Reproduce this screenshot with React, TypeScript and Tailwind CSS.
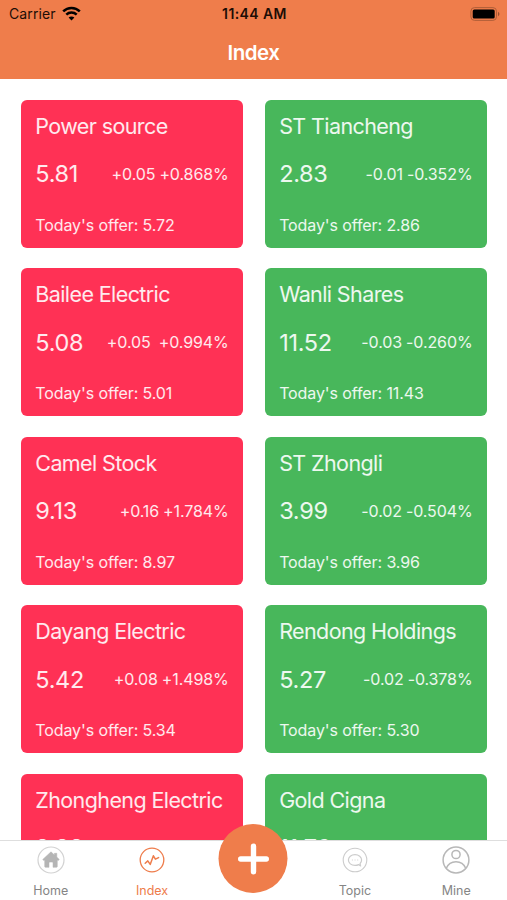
import React, { useState } from 'react';

interface Stock {
  name: string;
  price: string;
  change: string;
  percent: string;
  offer: string;
  wide?: boolean;
}

const STOCKS: Stock[] = [
  { name: 'Power source', price: '5.81', change: '+0.05', percent: '+0.868%', offer: '5.72' },
  { name: 'ST Tiancheng', price: '2.83', change: '-0.01', percent: '-0.352%', offer: '2.86' },
  { name: 'Bailee Electric', price: '5.08', change: '+0.05', percent: '+0.994%', offer: '5.01', wide: true },
  { name: 'Wanli Shares', price: '11.52', change: '-0.03', percent: '-0.260%', offer: '11.43' },
  { name: 'Camel Stock', price: '9.13', change: '+0.16', percent: '+1.784%', offer: '8.97' },
  { name: 'ST Zhongli', price: '3.99', change: '-0.02', percent: '-0.504%', offer: '3.96' },
  { name: 'Dayang Electric', price: '5.42', change: '+0.08', percent: '+1.498%', offer: '5.34' },
  { name: 'Rendong Holdings', price: '5.27', change: '-0.02', percent: '-0.378%', offer: '5.30' },
  { name: 'Zhongheng Electric', price: '8.88', change: '', percent: '', offer: '' },
  { name: 'Gold Cigna', price: '11.76', change: '-', percent: '', offer: '' },
];

const HomeIcon = () => (
  <svg width="28" height="28" viewBox="0 0 28 28" fill="none">
    <circle cx="14" cy="14" r="13" stroke="#d2d2d2" strokeWidth="1.2" />
    <path d="M14 5.8 6 13.2c-.4.5-.1 1 .5 1h1.2v6.3c0 .5.3.8.8.8h3.5v-4.4c0-.5.3-.8.8-.8h2.4c.5 0 .8.3.8.8v4.4h3.5c.5 0 .8-.3.8-.8v-6.3h1.2c.6 0 .9-.5.5-1L19.8 11V7.3h-2.4V9z" fill="#b5b5b5" stroke="#b5b5b5" strokeWidth="0.5" strokeLinejoin="round" />
  </svg>
);

const IndexIcon = () => (
  <svg width="28" height="28" viewBox="0 0 28 28" fill="none" stroke="#ee7c4b" strokeLinecap="round" strokeLinejoin="round">
    <circle cx="14" cy="14" r="11.8" strokeWidth="1.3" />
    <path d="M7.2 17.2 9.8 14.9 12.2 18.4 15.4 9.8 17.4 13.2 20.6 11.6" strokeWidth="1.5" />
  </svg>
);

const TopicIcon = () => (
  <svg width="28" height="28" viewBox="0 0 28 28" fill="none" stroke="#cccccc" strokeLinecap="round" strokeLinejoin="round">
    <circle cx="14" cy="14" r="11.8" strokeWidth="1.1" />
    <path d="M17.6 18.6c-1 .5-2.2.8-3.6.8-3.8 0-6.6-2.3-6.6-5.3s2.8-5.4 6.6-5.4 6.6 2.4 6.6 5.4c0 1.3-.6 2.5-1.5 3.4l.5 2.5z" strokeWidth="1.2" />
    <path d="M11.3 14h.1M14 14h.1M16.7 14h.1" strokeWidth="1" />
  </svg>
);

const MineIcon = () => (
  <svg width="28" height="28" viewBox="0 0 28 28" fill="none" stroke="#b8b8b8" strokeWidth="1.5">
    <circle cx="14" cy="14" r="12.9" />
    <circle cx="14" cy="8.5" r="4.1" />
    <path d="M4.3 22.2c1.7-4.1 5.4-6.5 9.7-6.5s8 2.4 9.7 6.5" />
  </svg>
);

const StatusBar = () => (
  <div className="grid h-[27px] grid-cols-3 items-center pl-[9px] pr-[7px] text-[14px] text-[#1d0d06]">
    <div className="flex items-center gap-[6px]">
      <span className="tracking-[0.1px]">Carrier</span>
      <svg width="19" height="15" viewBox="0 0 19 15" fill="none" stroke="#000" strokeWidth="2.5">
        <path d="M1.2 5.4C5.8.8 13.2.8 17.8 5.4" />
        <path d="M4.3 8.6c2.9-2.8 7.5-2.8 10.4 0" />
        <path d="M9.5 14.5 6.6 11.5c1.6-1.5 4.2-1.5 5.8 0z" fill="#000" stroke="none" />
      </svg>
    </div>
    <span className="whitespace-nowrap text-center font-semibold tracking-[0.4px]">11:44 AM</span>
    <svg className="justify-self-end" width="30" height="14" viewBox="0 0 30 14">
      <rect x="0.9" y="0.6" width="25.6" height="12.8" rx="3.6" fill="none" stroke="#b05e38" />
      <rect x="2.7" y="2.5" width="22" height="9" rx="1.6" fill="#000" />
      <path d="M28 4.8c1.9.8 1.9 3.6 0 4.4z" fill="#9a502f" />
    </svg>
  </div>
);

const StockCard: React.FC<{ stock: Stock }> = ({ stock }) => {
  const falling = stock.change.startsWith('-');
  return (
    <div className={`flex h-[148px] flex-col rounded-[6px] px-[14px] text-white/90 ${falling ? 'bg-[#48b75b]' : 'bg-[#ff3155]'}`}>
      <h2 className="mt-[12px] whitespace-nowrap text-[21.5px] leading-[28px] tracking-[-0.6px]">{stock.name}</h2>
      <div className="mt-[19px] flex h-[30px] items-center justify-between">
        <span className="pt-px text-[23.5px] tracking-[-0.3px]">{stock.price}</span>
        {stock.percent && (
          <span className={`flex text-[16px] tracking-[-0.1px] ${stock.wide ? 'gap-[8px]' : 'gap-[4px]'}`}>
            <span>{stock.change}</span>
            <span>{stock.percent}</span>
          </span>
        )}
      </div>
      {stock.offer && (
        <p className="mt-[25px] text-[16px] leading-[22px] tracking-[-0.1px]">Today's offer: {stock.offer}</p>
      )}
    </div>
  );
};

const TABS = [
  { id: 'home', name: 'Home', icon: HomeIcon },
  { id: 'index', name: 'Index', icon: IndexIcon },
  { id: 'add', name: '', icon: null },
  { id: 'topic', name: 'Topic', icon: TopicIcon },
  { id: 'mine', name: 'Mine', icon: MineIcon },
];

const App: React.FC = () => {
  const [activeTab, setActiveTab] = useState('index');

  return (
    <div className="flex h-screen flex-col overflow-hidden bg-white font-['Inter',sans-serif]">
      {/* Header */}
      <header className="h-[79px] shrink-0 bg-[#ef7d4b]">
        <StatusBar />
        <h1 className="text-center text-[20.5px] font-semibold leading-[51px] tracking-[-0.5px] text-white">Index</h1>
      </header>

      {/* Stock list */}
      <main className="min-h-0 flex-1 overflow-hidden pl-[21.3px] pr-[20.5px] pt-[20.6px]">
        <div className="grid grid-cols-2 gap-x-[22.5px] gap-y-[20.5px]">
          {STOCKS.map((stock) => (
            <StockCard key={stock.name} stock={stock} />
          ))}
        </div>
      </main>

      {/* Tab bar */}
      <nav className="relative grid h-[60px] shrink-0 grid-cols-5 border-t border-[#dedede] bg-white">
        {TABS.map((tab) =>
          tab.icon ? (
            <button
              key={tab.id}
              onClick={() => setActiveTab(tab.id)}
              className={`flex flex-col items-center pt-[5px] text-[12.5px] leading-[16px] ${
                activeTab === tab.id ? 'text-[#ee7c4b]' : 'text-[#858585]'
              }`}
            >
              <tab.icon />
              <span className="mt-[9px]">{tab.name}</span>
            </button>
          ) : (
            <div key={tab.id} className="relative">
              <button aria-label="Add" className="absolute left-1/2 top-[-17px] flex h-[69px] w-[69px] -translate-x-1/2 items-center justify-center rounded-full bg-[#ef7d4b]">
                <svg width="34" height="34" viewBox="0 0 34 34" stroke="#fff" strokeWidth="5.4" strokeLinecap="round">
                  <path d="M17 4.2v25.6M4.2 17h25.6" />
                </svg>
              </button>
            </div>
          )
        )}
      </nav>
    </div>
  );
};

export default App;
